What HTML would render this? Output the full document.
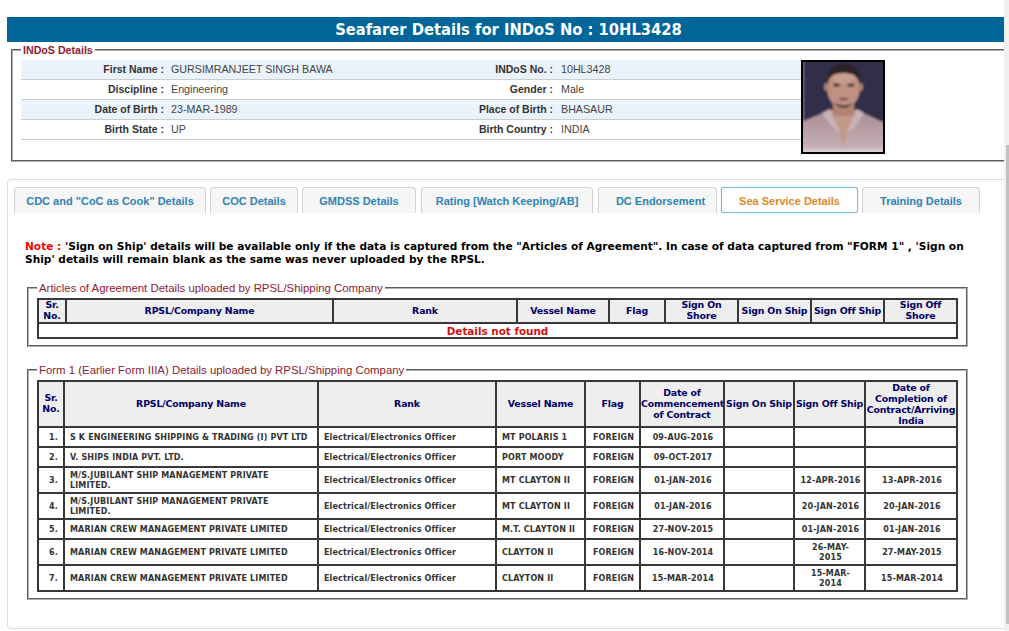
<!DOCTYPE html>
<html lang="en">
<head>
<meta charset="utf-8">
<title>Seafarer Details</title>
<style>
html,body{margin:0;padding:0;background:#fff;}
body{width:1009px;height:631px;overflow:hidden;position:relative;font-family:"Liberation Sans",sans-serif;font-size:12px;color:#333;}
.abs{position:absolute;}
#hdr{left:7px;top:17px;width:997px;height:25px;background:#006699;color:#fff;text-align:center;font-family:"DejaVu Sans Condensed","DejaVu Sans",sans-serif;font-weight:bold;font-size:16.4px;line-height:24px;}
#hdr span{position:relative;left:3px;top:1px;}
fieldset{margin:0;padding:0;border:2px groove #b0b0b0;box-sizing:border-box;}
legend{padding:0 2px;color:#8e1a33;font-size:10.65px;line-height:14px;font-family:"Liberation Sans",sans-serif;}
#fs1{left:11px;top:43px;width:1000px;height:119px;}
#fs1 legend{margin-left:8px;font-weight:bold;}
#info{left:21px;top:60px;width:780px;border-collapse:collapse;table-layout:fixed;}
#info td{height:19px;padding:0;border-bottom:1px solid #cdcdcd;font-size:10.7px;line-height:19px;white-space:nowrap;color:#333;}
#info tr.o td{background:#eaf2fb;}
#info td.l{text-align:right;font-weight:bold;color:#333;font-size:10.5px;}
#info td.v{padding-left:7px;color:#444;}
#info td.v2{padding-left:8px;}
#photo{left:801px;top:60px;}
#sb{left:1004px;top:0;width:5px;height:631px;background:#f1f1f1;}
#sbt{left:1006px;top:145px;width:3px;height:479px;background:#c1c1c1;}
#tabs{left:7px;top:179px;width:1010px;height:450px;border:1px solid #ddd;border-radius:4px;box-sizing:border-box;}
.tab{top:187px;height:26px;box-sizing:border-box;border:1px solid #d3d3d3;border-bottom:none;border-radius:4px 4px 0 0;background:#f6f6f6;color:#2e83b5;font-size:11px;font-weight:bold;line-height:26px;text-align:center;white-space:nowrap;}
.tab.act{height:26px;border:1px solid #79b7e7;border-radius:3px;background:#fff;color:#e4872a;box-shadow:0 0 1px #79b7e7;}
#note{left:25px;top:240px;width:960px;font-family:"DejaVu Sans",sans-serif;font-weight:bold;font-size:10.6px;line-height:13px;color:#000;}
#note b{color:#ff0000;}
#fs2{left:27px;top:281px;width:941px;height:66px;}
#fs3{left:27px;top:363px;width:941px;height:237px;}
#fs2 legend,#fs3 legend{margin-left:8px;font-size:11.4px;}
table.g{border-collapse:collapse;table-layout:fixed;font-family:"DejaVu Sans",sans-serif;font-weight:bold;}
table.g td,table.g th{white-space:nowrap;border:2px solid #383838;padding:0;overflow:hidden;}
table.g th{white-space:nowrap;background:#eee;color:#000066;font-size:9.4px;letter-spacing:-0.17px;line-height:11px;text-align:center;}
table.g th div{position:relative;top:-1px;}
table.g td{font-size:8px;letter-spacing:0.15px;line-height:10px;color:#333;padding-top:2px;}
table.g td.n{text-align:right;padding-right:5px;}
table.g td.c{padding-left:5px;}
table.g td.m{text-align:center;padding-left:2px;}
#t1{left:37px;top:298px;width:921px;}
#t2{left:37px;top:380px;width:921px;}
</style>
</head>
<body>
<div id="hdr" class="abs"><span>Seafarer Details for INDoS No : 10HL3428</span></div>

<fieldset id="fs1" class="abs"><legend>INDoS Details</legend></fieldset>
<table id="info" class="abs">
<colgroup><col style="width:143px"><col style="width:247px"><col style="width:142px"><col style="width:248px"></colgroup>
<tr class="o"><td class="l">First Name :</td><td class="v">GURSIMRANJEET SINGH BAWA</td><td class="l">INDoS No. :</td><td class="v v2">10HL3428</td></tr>
<tr><td class="l">Discipline :</td><td class="v">Engineering</td><td class="l">Gender :</td><td class="v v2">Male</td></tr>
<tr class="o"><td class="l">Date of Birth :</td><td class="v">23-MAR-1989</td><td class="l">Place of Birth :</td><td class="v v2">BHASAUR</td></tr>
<tr><td class="l">Birth State :</td><td class="v">UP</td><td class="l">Birth Country :</td><td class="v v2">INDIA</td></tr>
</table>
<svg id="photo" class="abs" width="84" height="94" viewBox="0 0 84 94">
<defs><filter id="bl" x="-10%" y="-10%" width="120%" height="120%"><feGaussianBlur stdDeviation="1.1"/></filter>
<linearGradient id="sh" x1="0" y1="0" x2="0" y2="1"><stop offset="0" stop-color="#a88b92"/><stop offset="1" stop-color="#cdb9bf"/></linearGradient>
<clipPath id="cp"><rect x="2" y="2" width="80" height="90"/></clipPath></defs>
<rect width="84" height="94" fill="#000"/>
<g clip-path="url(#cp)"><g filter="url(#bl)">
<rect x="0" y="0" width="84" height="94" fill="#302e49"/>
<rect x="0" y="0" width="3.2" height="94" fill="#6a6880"/>
<path d="M-2 96 L-2 63 L22 53 L30 50 L54 50 L62 53 L86 64 L86 96 Z" fill="url(#sh)"/>
<path d="M29 50 L42 87 L56 50 Z" fill="#c29a8c"/>
<path d="M21 53 L29 49 L40 74 L31 67 Z" fill="#c9b2b8"/>
<path d="M63 53 L56 49 L45 74 L54 67 Z" fill="#c9b2b8"/>
<rect x="32" y="38" width="21" height="18" fill="#b08373"/>
<ellipse cx="42.5" cy="27" rx="16.5" ry="22" fill="#bf9182"/>
<ellipse cx="42.5" cy="17" rx="11" ry="6" fill="#c9a090"/>
<ellipse cx="25" cy="27" rx="2" ry="4" fill="#a97f70"/><ellipse cx="60" cy="27" rx="2" ry="4" fill="#a97f70"/>
<path d="M26 26 C25 12 31 3.5 42.5 3.5 C54 3.5 60 12 59 26 C57 16 53 13 42.5 13 C32 13 28 16 26 26 Z" fill="#2a2226"/>
<ellipse cx="35.5" cy="25" rx="3.4" ry="1.5" fill="#3a2a2a"/>
<ellipse cx="50" cy="25" rx="3.4" ry="1.5" fill="#3a2a2a"/>
<ellipse cx="42.5" cy="39" rx="4.5" ry="1.3" fill="#7a4a48"/>
<path d="M33 42 C36 50 49 50 52 42 C50 46 36 46 33 42 Z" fill="#5a4038"/>
<rect x="0" y="89" width="84" height="5" fill="#d8ccd0"/>
</g></g>
</svg>

<div id="tabs" class="abs"></div>
<div class="tab abs" style="left:14px;width:192px;">CDC and "CoC as Cook" Details</div>
<div class="tab abs" style="left:210px;width:88px;">COC Details</div>
<div class="tab abs" style="left:302px;width:114px;">GMDSS Details</div>
<div class="tab abs" style="left:421px;width:172px;">Rating [Watch Keeping/AB]</div>
<div class="tab abs" style="left:598px;width:119px;padding-left:6px;">DC Endorsement</div>
<div class="tab act abs" style="left:721px;width:137px;">Sea Service Details</div>
<div class="tab abs" style="left:862px;width:118px;">Training Details</div>

<div id="note" class="abs"><b>Note :</b> 'Sign on Ship' details will be available only if the data is captured from the "Articles of Agreement". In case of data captured from "FORM 1" , 'Sign on Ship' details will remain blank as the same was never uploaded by the RPSL.</div>

<fieldset id="fs2" class="abs"><legend>Articles of Agreement Details uploaded by RPSL/Shipping Company</legend></fieldset>
<table id="t1" class="g abs">
<colgroup><col style="width:28px"><col style="width:267px"><col style="width:184px"><col style="width:92px"><col style="width:56px"><col style="width:73px"><col style="width:73px"><col style="width:73px"><col style="width:73px"></colgroup>
<tr style="height:24px"><th><div>Sr.<br>No.</div></th><th><div>RPSL/Company Name</div></th><th><div>Rank</div></th><th><div>Vessel Name</div></th><th><div>Flag</div></th><th><div>Sign On<br>Shore</div></th><th><div>Sign On Ship</div></th><th><div>Sign Off Ship</div></th><th><div>Sign Off<br>Shore</div></th></tr>
<tr style="height:15px"><td colspan="9" style="padding-top:2px;letter-spacing:0;text-align:center;color:#d01010;font-size:10.4px;line-height:11px;">Details not found</td></tr>
</table>

<fieldset id="fs3" class="abs"><legend>Form 1 (Earlier Form IIIA) Details uploaded by RPSL/Shipping Company</legend></fieldset>
<table id="t2" class="g abs">
<colgroup><col style="width:26px"><col style="width:254px"><col style="width:178px"><col style="width:89px"><col style="width:55px"><col style="width:84px"><col style="width:70px"><col style="width:71px"><col style="width:92px"></colgroup>
<tr style="height:46px"><th><div>Sr.<br>No.</div></th><th><div>RPSL/Company Name</div></th><th><div>Rank</div></th><th><div>Vessel Name</div></th><th><div>Flag</div></th><th><div>Date of<br>Commencement<br>of Contract</div></th><th><div>Sign On Ship</div></th><th><div>Sign Off Ship</div></th><th>Date of<br>Completion of<br>Contract/Arriving<br>India</th></tr>
<tr style="height:20px"><td class="n">1.</td><td class="c">S K ENGINEERING SHIPPING &amp; TRADING (I) PVT LTD</td><td class="c">Electrical/Electronics Officer</td><td class="c">MT POLARIS 1</td><td class="m">FOREIGN</td><td class="m">09-AUG-2016</td><td class="m"></td><td class="m"></td><td class="m"></td></tr>
<tr style="height:20px"><td class="n">2.</td><td class="c">V. SHIPS INDIA PVT. LTD.</td><td class="c">Electrical/Electronics Officer</td><td class="c">PORT MOODY</td><td class="m">FOREIGN</td><td class="m">09-OCT-2017</td><td class="m"></td><td class="m"></td><td class="m"></td></tr>
<tr style="height:26px"><td class="n">3.</td><td class="c">M/S.JUBILANT SHIP MANAGEMENT PRIVATE<br>LIMITED.</td><td class="c">Electrical/Electronics Officer</td><td class="c">MT CLAYTON II</td><td class="m">FOREIGN</td><td class="m">01-JAN-2016</td><td class="m"></td><td class="m">12-APR-2016</td><td class="m">13-APR-2016</td></tr>
<tr style="height:26px"><td class="n">4.</td><td class="c">M/S.JUBILANT SHIP MANAGEMENT PRIVATE<br>LIMITED.</td><td class="c">Electrical/Electronics Officer</td><td class="c">MT CLAYTON II</td><td class="m">FOREIGN</td><td class="m">01-JAN-2016</td><td class="m"></td><td class="m">20-JAN-2016</td><td class="m">20-JAN-2016</td></tr>
<tr style="height:20px"><td class="n">5.</td><td class="c">MARIAN CREW MANAGEMENT PRIVATE LIMITED</td><td class="c">Electrical/Electronics Officer</td><td class="c">M.T. CLAYTON II</td><td class="m">FOREIGN</td><td class="m">27-NOV-2015</td><td class="m"></td><td class="m">01-JAN-2016</td><td class="m">01-JAN-2016</td></tr>
<tr style="height:26px"><td class="n">6.</td><td class="c">MARIAN CREW MANAGEMENT PRIVATE LIMITED</td><td class="c">Electrical/Electronics Officer</td><td class="c">CLAYTON II</td><td class="m">FOREIGN</td><td class="m">16-NOV-2014</td><td class="m"></td><td class="m">26-MAY-<br>2015</td><td class="m">27-MAY-2015</td></tr>
<tr style="height:26px"><td class="n">7.</td><td class="c">MARIAN CREW MANAGEMENT PRIVATE LIMITED</td><td class="c">Electrical/Electronics Officer</td><td class="c">CLAYTON II</td><td class="m">FOREIGN</td><td class="m">15-MAR-2014</td><td class="m"></td><td class="m">15-MAR-<br>2014</td><td class="m">15-MAR-2014</td></tr>
</table>

<div id="sb" class="abs"></div><div id="sbt" class="abs"></div>
</body>
</html>
